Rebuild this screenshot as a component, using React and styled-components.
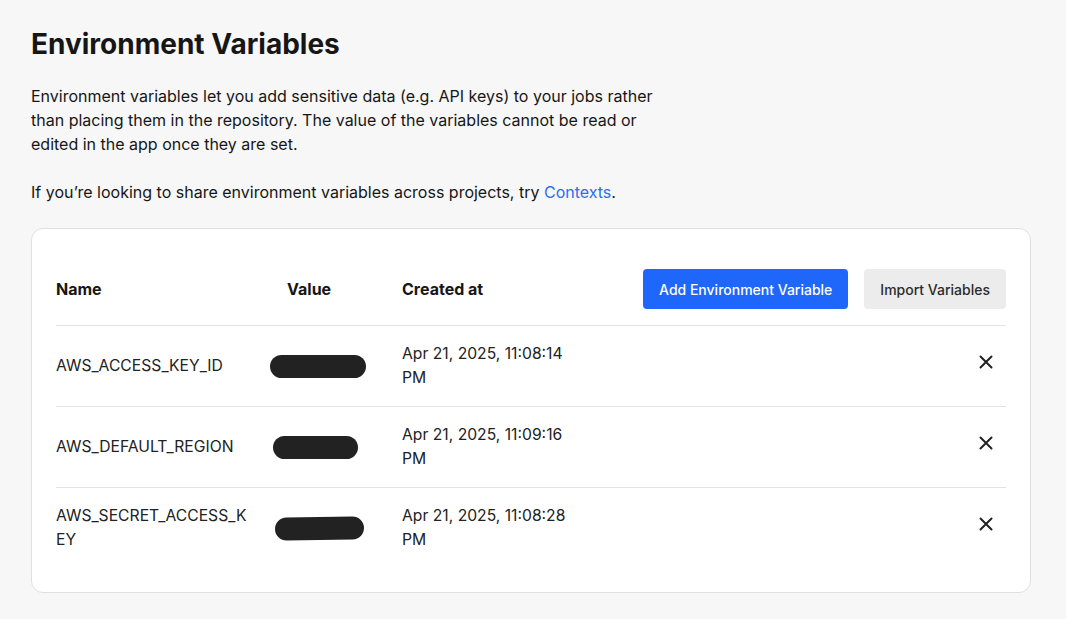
import React from "react";
import styled, { createGlobalStyle } from "styled-components";

const Global = createGlobalStyle`
  html, body { margin: 0; padding: 0; background: #f7f7f7; }
  body { font-family: Inter, "Noto Sans", sans-serif; color: #161616; }
  * { box-sizing: border-box; }
`;

const Page = styled.main`
  padding: 24px 35px 26px 31px;
`;

const Title = styled.h1`
  margin: 0 0 20px;
  font-size: 28px;
  line-height: 40px;
  font-weight: 700;
  color: #161616;
`;

const Para = styled.p`
  margin: 0 0 ${(p) => p.$mb || 0}px;
  max-width: 640px;
  font-size: 16px;
  line-height: 24px;
  color: #161616;
`;

const Link = styled.a`
  color: #2a6ff3;
  text-decoration: none;
`;

const Card = styled.section`
  margin-top: 24px;
  background: #fff;
  border: 1px solid #e0e0e0;
  border-radius: 12px;
  padding: 24px;
`;

const Row = styled.div`
  display: grid;
  grid-template-columns: 214px 132px 190px 1fr;
  align-items: center;
  padding: 16px 0;
  border-bottom: ${(p) => (p.$last ? "none" : "1px solid #e3e3e3")};
`;

const HeadCell = styled.div`
  font-size: 16px;
  font-weight: 700;
  color: #161616;
  padding-left: ${(p) => p.$pl || 0}px;
`;

const Cell = styled.div`
  font-size: 15.7px;
  line-height: 24px;
  color: #222;
  word-break: ${(p) => (p.$breakAll ? "break-all" : "normal")};
  padding-right: ${(p) => p.$pr || 0}px;
`;

const Actions = styled.div`
  display: flex;
  justify-content: flex-end;
  gap: 16px;
`;

const Button = styled.button`
  height: 40px;
  padding: 0 16px;
  border: none;
  border-radius: 4px;
  font-family: inherit;
  font-size: 14px;
  font-weight: 500;
  cursor: pointer;
  background: ${(p) => (p.$primary ? "#1f66fa" : "#ececec")};
  color: ${(p) => (p.$primary ? "#fff" : "#2b2b2b")};
`;

const Redacted = styled.span`
  display: block;
  height: 23px;
  border-radius: 12px;
  background: #222;
  width: ${(p) => p.$w}px;
  margin-left: ${(p) => p.$ml}px;
  transform: rotate(${(p) => p.$rot || 0}deg);
`;

const CloseWrap = styled.div`
  display: flex;
  justify-content: flex-end;
  padding-right: 13px;
`;

const CloseBtn = styled.button`
  width: 14px;
  height: 14px;
  padding: 0;
  border: none;
  background: none;
  cursor: pointer;
  display: flex;
  margin-top: -8px;
`;

const CloseIcon = () => (
  <svg width="14" height="14" viewBox="0 0 14 14">
    <path d="M1.5 1.5L12.5 12.5M12.5 1.5L1.5 12.5" stroke="#222" strokeWidth="2" strokeLinecap="round" />
  </svg>
);

const vars = [
  { name: "AWS_ACCESS_KEY_ID", date: "Apr 21, 2025, 11:08:14 PM", w: 96, ml: 0 },
  { name: "AWS_DEFAULT_REGION", date: "Apr 21, 2025, 11:09:16 PM", w: 85, ml: 3 },
  { name: "AWS_SECRET_ACCESS_KEY", date: "Apr 21, 2025, 11:08:28 PM", w: 89, ml: 5, rot: -1 },
];

export default function App() {
  return (
    <>
      <Global />
      <Page>
        <Title>Environment Variables</Title>
        <Para $mb={24}>
          Environment variables let you add sensitive data (e.g. API keys) to your jobs rather than placing
          them in the repository. The value of the variables cannot be read or edited in the app once they are
          set.
        </Para>
        <Para>
          If you’re looking to share environment variables across projects, try <Link href="#">Contexts</Link>.
        </Para>
        <Card>
          <Row>
            <HeadCell>Name</HeadCell>
            <HeadCell $pl={17}>Value</HeadCell>
            <HeadCell>Created at</HeadCell>
            <Actions>
              <Button $primary>Add Environment Variable</Button>
              <Button>Import Variables</Button>
            </Actions>
          </Row>
          {vars.map((v, i) => (
            <Row key={v.name} $last={i === vars.length - 1}>
              <Cell $breakAll $pr={17}>{v.name}</Cell>
              <Cell>
                <Redacted $w={v.w} $ml={v.ml} $rot={v.rot} />
              </Cell>
              <Cell $pr={12}>{v.date}</Cell>
              <CloseWrap>
                <CloseBtn aria-label="Delete">
                  <CloseIcon />
                </CloseBtn>
              </CloseWrap>
            </Row>
          ))}
        </Card>
      </Page>
    </>
  );
}
